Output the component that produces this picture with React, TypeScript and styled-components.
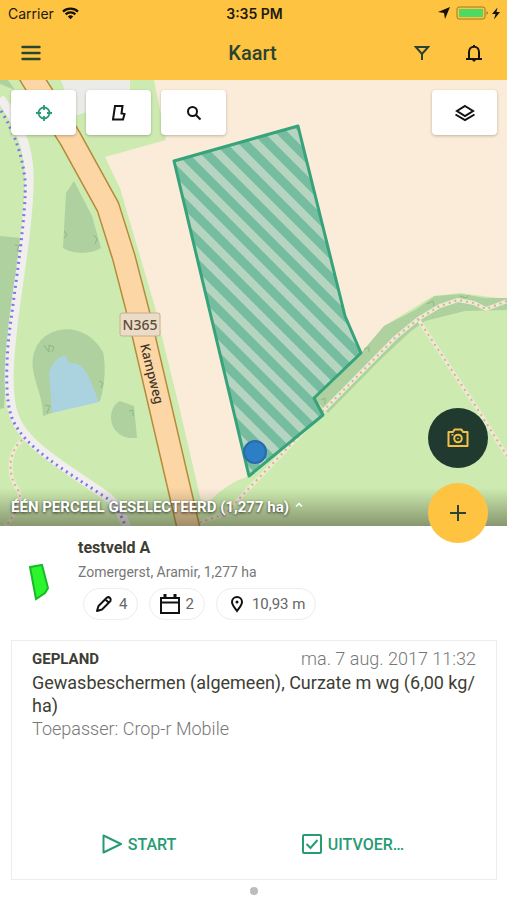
import React from "react";
import styled, { createGlobalStyle } from "styled-components";

const GlobalStyle = createGlobalStyle`
  *, *::before, *::after { box-sizing: border-box; }
  body { margin: 0; background: #fff; font-family: Roboto, sans-serif; color: #3d3d33; }
  button { font: inherit; color: inherit; border: 0; padding: 0; background: none; cursor: pointer; }
  h1, h2, p { margin: 0; }
  svg { display: block; }
`;

const Page = styled.div`
  min-height: 100vh;
  display: flex;
  flex-direction: column;
`;

const Header = styled.header`
  background: #ffc342;
`;

const StatusBar = styled.div`
  display: grid;
  grid-template-columns: 1fr auto 1fr;
  align-items: center;
  height: 26px;
  padding: 0 6px 0 8px;
  font-family: Inter, sans-serif;
  font-size: 14px;
  color: #1d1a10;
`;

const StatusGroup = styled.div<{ $end?: boolean }>`
  display: flex;
  align-items: center;
  gap: ${(p) => (p.$end ? "6px" : "8px")};
  justify-content: ${(p) => (p.$end ? "flex-end" : "flex-start")};
`;

const Clock = styled.time`
  font-weight: 600;
`;

const NavBar = styled.nav`
  display: grid;
  grid-template-columns: 1fr auto 1fr;
  align-items: center;
  height: 54px;
  padding: 0 22px 0 20px;
  color: #2b4331;
`;

const NavActions = styled.div`
  display: flex;
  justify-content: flex-end;
  gap: 30px;
`;

const Title = styled.h1`
  font-size: 20px;
  line-height: 24px;
  font-weight: 500;
`;

const IconButton = styled.button<{ $dark?: boolean }>`
  width: 22px;
  height: 24px;
  display: grid;
  place-items: center;
  color: ${(p) => (p.$dark ? "#14150e" : "#2b4331")};
`;

const MapArea = styled.section`
  position: relative;
  flex: 1;
  min-height: 320px;
  display: flex;
  flex-direction: column;
  justify-content: space-between;
`;

const MapDrawing = styled.svg`
  position: absolute;
  inset: 0;
  width: 100%;
  height: 100%;
`;

const MapTools = styled.div`
  position: relative;
  display: flex;
  gap: 10px;
  padding: 10px 10px 0 11px;
`;

const ToolButton = styled.button<{ $active?: boolean; $last?: boolean }>`
  width: 65px;
  height: 45px;
  display: grid;
  place-items: center;
  margin-left: ${(p) => (p.$last ? "auto" : "0")};
  border-radius: 4px;
  background: #fff;
  color: ${(p) => (p.$active ? "#279b74" : "#111")};
  box-shadow: 0 1px 3px rgba(0, 0, 0, 0.25);
`;

const SelectionBar = styled.button`
  position: relative;
  display: flex;
  align-items: center;
  gap: 6px;
  height: 38px;
  padding: 0 11px;
  background: linear-gradient(rgba(60, 60, 40, 0), rgba(60, 60, 40, 0.48));
  color: #fff;
  font-size: 15px;
  font-weight: 700;
  text-align: left;
  text-shadow: 0 1px 3px rgba(0, 0, 0, 0.75);
`;

const FloatingActions = styled.div`
  position: absolute;
  right: 19px;
  bottom: -17px;
  display: grid;
  gap: 15px;
`;

const FloatingButton = styled.button<{ $dark?: boolean }>`
  width: 60px;
  height: 60px;
  display: grid;
  place-items: center;
  border-radius: 50%;
  background: ${(p) => (p.$dark ? "#203a30" : "#ffc342")};
  color: ${(p) => (p.$dark ? "#f5bf45" : "#2b4331")};
`;

const Sheet = styled.main`
  padding: 10px 10px 5px 11px;
`;

const Parcel = styled.section`
  display: grid;
  grid-template-columns: 56px 1fr;
  column-gap: 11px;
  align-items: center;
`;

const ParcelShape = styled.svg`
  justify-self: center;
  margin-top: 8px;
`;

const ParcelName = styled.h2`
  font-size: 16px;
  line-height: 24px;
  font-weight: 700;
`;

const ParcelMeta = styled.p`
  font-size: 14px;
  line-height: 24px;
  color: #777;
`;

const Chips = styled.div`
  display: flex;
  gap: 11px;
  margin-top: 4px;
  padding-left: 5px;
`;

const Chip = styled.button`
  display: flex;
  align-items: center;
  gap: 5px;
  height: 32px;
  padding: 0 10px;
  border: 1px solid #ededed;
  border-radius: 16px;
  font-size: 15px;
  color: #666;

  svg { color: #111; }
`;

const Card = styled.article`
  display: flex;
  flex-direction: column;
  min-height: 240px;
  margin-top: 20px;
  padding: 6px 20px 20px;
  border: 1px solid #ececec;
`;

const CardHead = styled.div`
  display: flex;
  justify-content: space-between;
  align-items: center;
  line-height: 24px;
`;

const Status = styled.strong`
  font-size: 15px;
  font-weight: 700;
`;

const When = styled.time`
  font-size: 18px;
  font-weight: 300;
  color: #777;
`;

const Task = styled.p`
  font-size: 18px;
  line-height: 23px;
`;

const Applicator = styled.p`
  font-size: 18px;
  line-height: 24px;
  font-weight: 300;
  color: #777;
`;

const Actions = styled.div`
  display: grid;
  grid-template-columns: 1fr 1fr;
  margin-top: auto;
  padding-right: 16px;
`;

const Action = styled.button`
  display: flex;
  align-items: center;
  justify-content: center;
  gap: 6px;
  height: 30px;
  font-size: 16px;
  font-weight: 500;
  color: #279b74;
`;

const Pager = styled.div`
  display: flex;
  justify-content: center;
  padding-top: 7px;
`;

const Dot = styled.button`
  width: 8px;
  height: 8px;
  border-radius: 50%;
  background: #bcbcbc;
`;

const MAIN_ROAD = "M27 70L33 80L70 138L108 207L124 258L138 312L144 337L188 526L191 540";
const CYCLEWAY =
  "M-2 106C10 124 22 150 25 180C27 210 16 280 9 335C6 365 5 400 12 418C24 448 65 470 108 499C117 506 121 515 127 530";
const FOOTPATHS = [
  "M22 440C8 452 7 475 18 490C24 500 15 515 4 528",
  "M507 301L486 309L474 303L458 300L440 306L418 319L395 338L325 409L253 484L225 514L195 524",
  "M418 319L480 413L507 456L530 490",
];
const PARCEL = "M174 161L298 126L345 316L361 353L314 398L323 415L249 476Z";

function FieldMap() {
  return (
    <MapDrawing viewBox="0 80 507 446" preserveAspectRatio="xMidYMid slice" role="img" aria-label="Kaart met perceel">
      <defs>
        <pattern id="hatch" width="17" height="17" patternUnits="userSpaceOnUse" patternTransform="translate(178 161) rotate(45)">
          <rect width="17" height="17" fill="#b6d5c1" />
          <rect width="17" height="9" y="4" fill="#75bd9e" />
        </pattern>
      </defs>
      <rect x="-200" y="-100" width="900" height="900" fill="#cdebb0" />
      <path d="M60 78H130V97L75 116Z" fill="#ebebe8" />
      <path d="M0 80H8L15 90L0 84Z" fill="#aed19f" />
      <path d="M152 70L166 140L105 157L120 188L155 307L162 337L180 410L201 501L210 501C222 488 236 480 249 476L361 353L384 326L433 296L460 293L507 299V70Z" fill="#fbecd9" />
      <path d="M314 398L361 353L384 326L415 310L435 296L462 294L485 298L507 298V310L465 311L425 321L410 332L380 360L328 413Z" fill="#aed19f" />
      <path d="M0 236L21 238L15 290L8 340L4 408L0 409Z" fill="#aed19f" />
      <path d="M74 181L66 193L63 248C72 254 90 255 101 248L92 216Z" fill="#aed19f" />
      <path d="M43 416L84 402L100 401C105 385 106 364 103 352C91 331 70 325 53 332C37 338 31 354 33 369C35 385 43 397 43 416Z" fill="#aed19f" />
      <path d="M52 413L49 372C53 360 61 355 66 356L69 363L75 363C86 367 89 376 99 402Z" fill="#aad3df" />
      <path d="M120 401C110 406 108 422 116 431C122 438 129 438 137 438L134 406Z" fill="#aed19f" />
      <g fill="none" stroke="#8fb780">
        <path d="M44 345l5 7v-7l5 2-2 5M64 231l3 4-3 3M94 235l3 4-2 5M15 245l4 1-2 5M99 381l4 2-2 5M45 405l5 1-3 7M129 411l4-1v6M427 304l6-3 1 5M460 296l6 2 3-3M364 349l5-2v5M321 400l4-2v6" />
      </g>
      <path d="M0 98C23 128 31 155 29 190C27 240 17 285 12 335C8 370 7 400 15 418C25 446 70 470 109 498C118 506 122 515 128 530" fill="none" stroke="#f1eeee" strokeWidth="9" />
      <path d={CYCLEWAY} fill="none" stroke="#7d77e8" strokeWidth="3" strokeDasharray="2 4" />
      {FOOTPATHS.map((d) => (
        <g key={d} fill="none" strokeLinejoin="round">
          <path d={d} stroke="#e5eed0" strokeWidth="4" />
          <path d={d} stroke="#f1a295" strokeWidth="2" strokeDasharray="2 4" />
        </g>
      ))}
      <path d={MAIN_ROAD} fill="none" stroke="#b58b38" strokeWidth="24" strokeLinejoin="round" />
      <path d={MAIN_ROAD} fill="none" stroke="#fcd6a4" strokeWidth="21" strokeLinejoin="round" />
      <rect x="120" y="313" width="40" height="23" rx="2" fill="#eadcc8" stroke="#c8b08c" />
      <text x="140" y="330" textAnchor="middle" fontFamily="Noto Sans, sans-serif" fontSize="14" fontWeight="500" fill="#5c4d38">N365</text>
      <text transform="translate(140 345) rotate(76)" fontFamily="Noto Sans, sans-serif" fontSize="13" fontWeight="500" fill="#40352a">Kampweg</text>
      <path d={PARCEL} fill="url(#hatch)" stroke="#36a37b" strokeWidth="3" strokeLinejoin="round" />
      <circle cx="255" cy="452" r="11" fill="#2c7fc4" stroke="#286aaa" strokeWidth="2" />
    </MapDrawing>
  );
}

export default function App() {
  return (
    <Page>
      <GlobalStyle />
      <Header>
        <StatusBar>
          <StatusGroup>
            <span>Carrier</span>
            <svg width="17" height="13" viewBox="0 0 17 13" fill="none" stroke="#15120a" strokeWidth="2.2">
              <path d="M1 4.6C5 .6 12 .6 16 4.6M3.6 7.4C6.3 4.7 10.7 4.7 13.4 7.4" />
              <path d="M5.8 9.4C7.4 8 9.6 8 11.2 9.4L8.5 12.3Z" fill="#15120a" stroke="none" />
            </svg>
          </StatusGroup>
          <Clock>3:35 PM</Clock>
          <StatusGroup $end>
            <svg width="12" height="12" viewBox="0 0 12 12"><path d="M12 0L7 12L6 6L0 5Z" fill="#15120a" /></svg>
            <svg width="45" height="14" viewBox="0 0 45 14">
              <rect x="1" y="1" width="28" height="12" rx="2" fill="none" stroke="#a07b22" />
              <rect x="3" y="3" width="24" height="8" fill="#4cd964" />
              <path d="M30.500 5v4c2-1 2-3 0-4Z" fill="#a07b22" />
              <path d="M41.500 1.500L36 8h3.500l-1.500 5.500 6-7.500h-3.500Z" fill="#15120a" />
            </svg>
          </StatusGroup>
        </StatusBar>
        <NavBar>
          <IconButton aria-label="Menu">
            <svg width="20" height="16" viewBox="0 0 20 16" stroke="currentColor" strokeWidth="2.400" strokeLinecap="round"><path d="M1.500 2H18.500M1.500 8H18.500M1.500 14H18.500" /></svg>
          </IconButton>
          <Title>Kaart</Title>
          <NavActions>
            <IconButton aria-label="Filter">
              <svg width="16" height="16" viewBox="0 0 16 16" fill="none" stroke="currentColor" strokeWidth="2"><path d="M1.800 2H14.200L8 9ZM8 8.500V15" /></svg>
            </IconButton>
            <IconButton $dark aria-label="Meldingen">
              <svg width="18" height="18" viewBox="0 0 18 18" fill="none" stroke="currentColor" strokeWidth="2"><path d="M4 15V8C4 1 14 1 14 8V15M1 15H17M9 1V3" /><path d="M7 16h4l-2 2Z" fill="currentColor" stroke="none" /></svg>
            </IconButton>
          </NavActions>
        </NavBar>
      </Header>

      <MapArea>
        <FieldMap />
        <MapTools>
          <ToolButton $active aria-label="Mijn locatie">
            <svg width="16" height="16" viewBox="0 0 16 16" fill="none" stroke="currentColor" strokeWidth="1.800"><circle cx="8" cy="8" r="5.500" /><path d="M8 0V5M8 11V16M0 8H5M11 8H16" /></svg>
          </ToolButton>
          <ToolButton aria-label="Perceel tekenen">
            <svg width="16" height="18" viewBox="0 0 16 18" fill="none" stroke="currentColor" strokeWidth="2"><path d="M4 2H11.500L10.500 9.500L13.500 10L12 15.500H2Z" /></svg>
          </ToolButton>
          <ToolButton aria-label="Zoeken">
            <svg width="16" height="16" viewBox="0 0 16 16" fill="none" stroke="currentColor" strokeWidth="2"><circle cx="6.500" cy="6.500" r="4.500" /><path d="M9.700 9.700L14.500 14.500" /></svg>
          </ToolButton>
          <ToolButton $last aria-label="Kaartlagen">
            <svg width="22" height="18" viewBox="0 0 22 18" fill="none" stroke="currentColor" strokeWidth="2"><path d="M11 2L19 7L11 12L3 7Z" /><path d="M1.500 10.500L11 16L20.500 10.500" /></svg>
          </ToolButton>
        </MapTools>
        <SelectionBar>
          ÉÉN PERCEEL GESELECTEERD (1,277 ha)
          <svg width="8" height="10" viewBox="0 0 8 10" fill="none" stroke="#fff" strokeWidth="1.500"><path d="M1 4.500L4 1.500L7 4.500" /></svg>
        </SelectionBar>
        <FloatingActions>
          <FloatingButton $dark aria-label="Foto maken">
            <svg width="22" height="20" viewBox="0 0 22 20" fill="none" stroke="currentColor" strokeWidth="2" strokeLinejoin="round"><path d="M1.500 4H6L7.500 1.500H14.500L16 4H20.500V18H1.500Z" /><circle cx="11" cy="10.500" r="3.800" /><circle cx="11" cy="10.500" r=".6" strokeWidth="1" /><path d="M4.500 6.800H6.500" strokeWidth="1.500" /></svg>
          </FloatingButton>
          <FloatingButton aria-label="Toevoegen">
            <svg width="16" height="16" viewBox="0 0 16 16" stroke="currentColor" strokeWidth="2"><path d="M8 0V16M0 8H16" /></svg>
          </FloatingButton>
        </FloatingActions>
      </MapArea>

      <Sheet>
        <Parcel>
          <ParcelShape width="22" height="38" viewBox="0 0 22 38"><path d="M2 4L14 2L20 25L17 30L8 36Z" fill="#2cf52c" stroke="#18b92b" strokeWidth="2" /></ParcelShape>
          <div>
            <ParcelName>testveld A</ParcelName>
            <ParcelMeta>Zomergerst, Aramir, 1,277 ha</ParcelMeta>
            <Chips>
              <Chip aria-label="4 bewerkingen">
                <svg width="20" height="18" viewBox="0 0 20 18" fill="none" stroke="currentColor" strokeWidth="2" strokeLinejoin="round"><path d="M3 16L4.500 11L13 2.500Q14.500 1.500 16 3T16.500 6L8 14.500ZM11.500 4.500L14.500 7.500" /></svg>
                4
              </Chip>
              <Chip aria-label="2 taken">
                <svg width="20" height="20" viewBox="0 0 20 20" fill="none" stroke="currentColor" strokeWidth="2"><path d="M1 4H19V19H1ZM1 8.500H19" /><path d="M5 0V5M15 0V5" strokeWidth="3" /></svg>
                2
              </Chip>
              <Chip aria-label="Afstand 10,93 m">
                <svg width="20" height="18" viewBox="0 0 20 18" fill="none" stroke="currentColor" strokeWidth="2"><path d="M10 16C7 12 5 10 5 7A5 5 0 0 1 15 7C15 10 13 12 10 16Z" /><circle cx="10" cy="7" r="1.500" fill="currentColor" stroke="none" /></svg>
                10,93 m
              </Chip>
            </Chips>
          </div>
        </Parcel>

        <Card>
          <CardHead>
            <Status>GEPLAND</Status>
            <When dateTime="2017-08-07T11:32">ma. 7 aug. 2017 11:32</When>
          </CardHead>
          <Task>Gewasbeschermen (algemeen), Curzate m wg (6,00 kg/ ha)</Task>
          <Applicator>Toepasser: Crop-r Mobile</Applicator>
          <Actions>
            <Action>
              <svg width="20" height="20" viewBox="0 0 20 20" fill="none" stroke="currentColor" strokeWidth="2" strokeLinejoin="round"><path d="M1.500 1.500L19 10L1.500 18.500Z" /></svg>
              START
            </Action>
            <Action>
              <svg width="20" height="20" viewBox="0 0 20 20" fill="none" stroke="currentColor" strokeWidth="2"><rect x="1" y="1" width="18" height="18" rx="1" /><path d="M4.500 10L8.500 14L15.500 6" /></svg>
              UITVOER…
            </Action>
          </Actions>
        </Card>
        <Pager><Dot aria-label="Pagina 1" /></Pager>
      </Sheet>
    </Page>
  );
}
